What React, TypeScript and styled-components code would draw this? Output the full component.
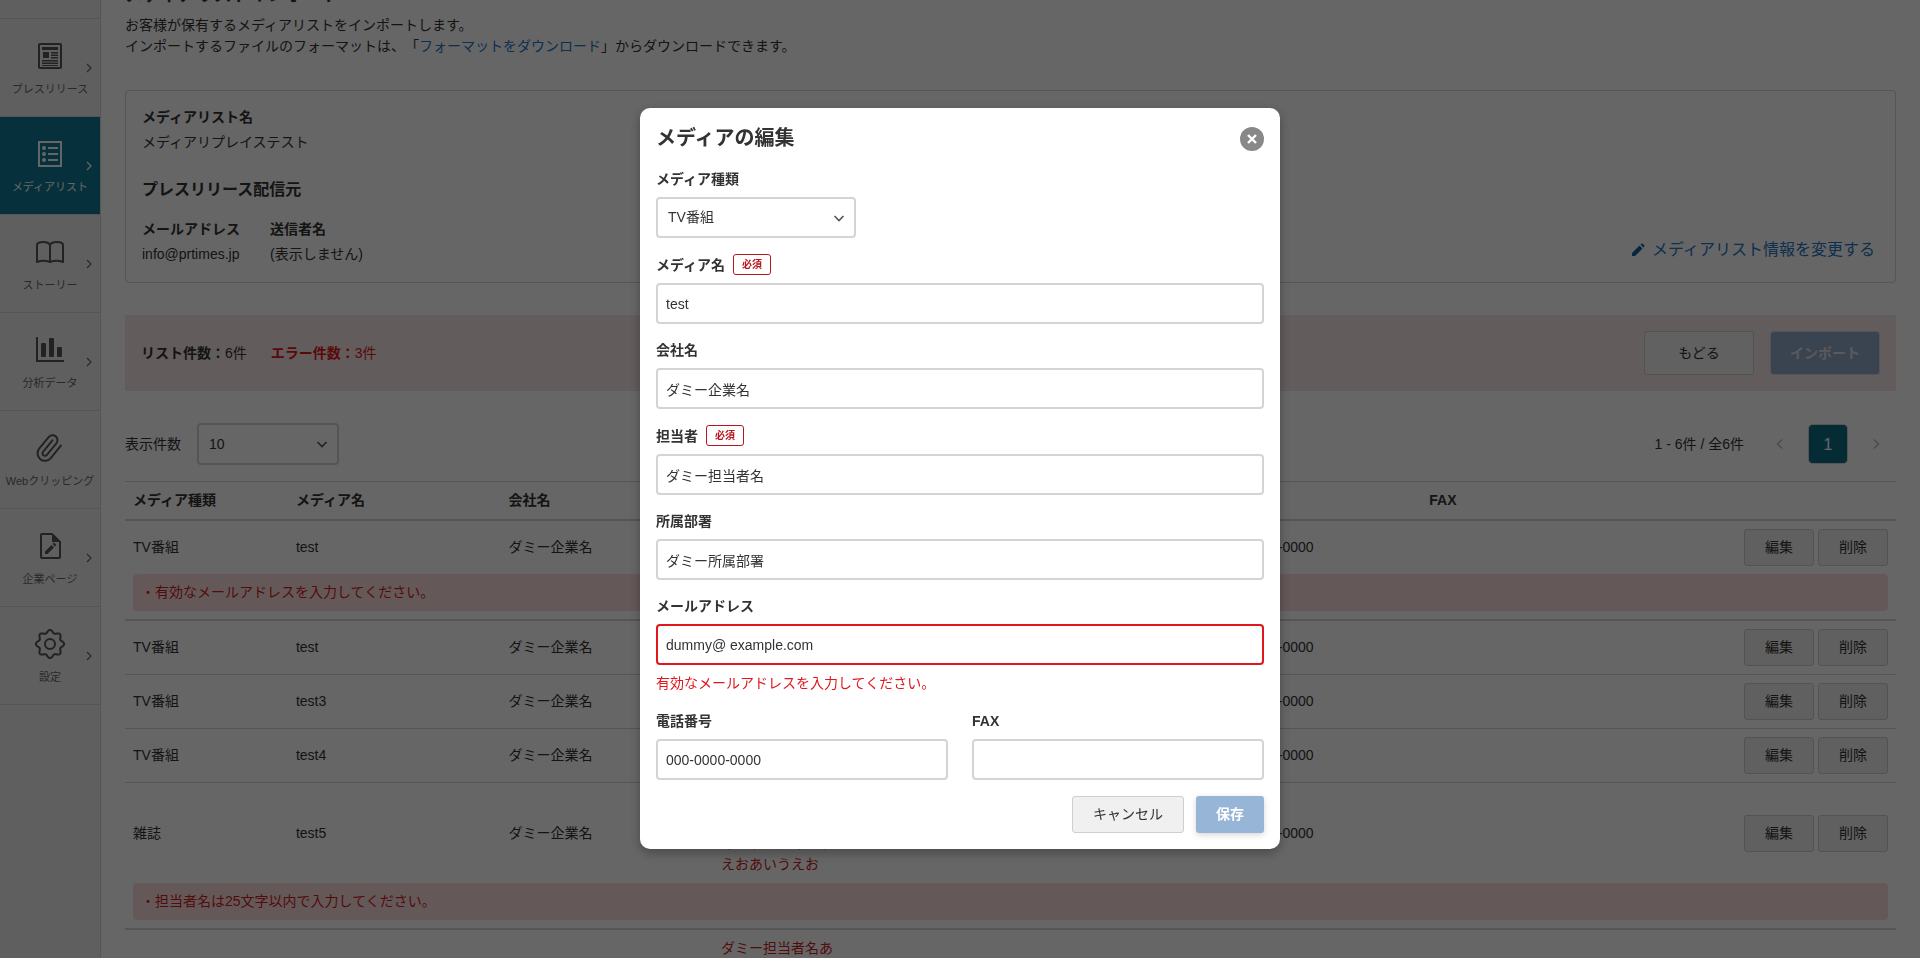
import React from "react";
import styled, { createGlobalStyle, css } from "styled-components";

const color = {
  text: "#333333",
  line: "#d4d4d4",
  link: "#2575c4",
  teal: "#0f7a97",
  danger: "#e0171c",
  badge: "#b7151b",
  errorText: "#cc1f1f",
  button: "#f0f0f0",
  primary: "#97b6d7",
};

const GlobalStyle = createGlobalStyle`
  *, *::before, *::after { box-sizing: border-box; }
  body {
    margin: 0;
    overflow: hidden;
    background: #fff;
    color: ${color.text};
    font-family: "Liberation Sans", "Noto Sans CJK JP", sans-serif;
    font-size: 14px;
    line-height: 21px;
    text-spacing-trim: space-all;
  }
  h1, h2, h3, p, dl, dt, dd, ul { margin: 0; padding: 0; }
  ul { list-style: none; }
  button, input, select { font: inherit; color: inherit; margin: 0; }
  button { cursor: pointer; }
  a { color: ${color.link}; text-decoration: none; }
`;

/* ---------- Shell ---------- */

const Shell = styled.div`
  display: flex;
  height: 100vh;
  overflow: hidden;
`;

const Sidebar = styled.nav`
  flex: none;
  width: 101px;
  padding-top: 18px;
  background: #eeeeee;
  border-right: 1px solid ${color.line};
`;

const SideList = styled.ul`
  border-bottom: 1px solid ${color.line};
`;

const SideLink = styled.a<{ $active?: boolean }>`
  position: relative;
  display: flex;
  flex-direction: column;
  align-items: center;
  gap: 8px;
  height: 98px;
  padding-top: 21px;
  border-top: 1px solid ${color.line};
  font-size: 11px;
  line-height: 18px;
  white-space: nowrap;
  color: ${(p) => (p.$active ? "#fff" : "#666")};
  ${(p) =>
    p.$active &&
    css`
      background: ${color.teal};
      background-clip: padding-box;
    `}
`;

const SideIcon = styled.svg<{ $active?: boolean }>`
  width: 32px;
  height: 32px;
  color: ${(p) => (p.$active ? "#fff" : "#555")};
`;

const SideArrow = styled.svg`
  position: absolute;
  top: 44px;
  right: 7px;
  width: 8px;
  height: 10px;
`;

const Main = styled.main`
  flex: 1;
  min-width: 0;
  margin-top: -18px;
  padding: 0 24px;
`;

const PageTitle = styled.h1`
  font-size: 18px;
  line-height: 27px;
  margin-bottom: 6px;
`;

const Lead = styled.p`
  margin-bottom: 33px;
`;

/* ---------- Summary card ---------- */

const Card = styled.section`
  display: flex;
  justify-content: space-between;
  align-items: flex-end;
  padding: 16px 20px 17px 16px;
  border: 1px solid ${color.line};
  border-radius: 4px;
`;

const CardTitle = styled.h2`
  margin: 24px 0 16px;
  font-size: 16px;
  line-height: 26px;
`;

const Facts = styled.dl`
  display: flex;
  gap: 30px;
`;

const FactName = styled.dt`
  font-weight: bold;
  margin-bottom: 4px;
`;

const EditLink = styled.a`
  display: flex;
  align-items: center;
  gap: 6px;
  height: 30px;
  font-size: 16px;
  line-height: 24px;
`;

const PencilIcon = styled.svg`
  width: 16px;
  height: 16px;
  fill: #145aa5;
`;

/* ---------- Status banner ---------- */

const Banner = styled.section`
  display: flex;
  align-items: center;
  justify-content: space-between;
  margin: 32px 0;
  padding: 16px;
  background: #f5e5e5;
`;

const Counts = styled.div`
  display: flex;
  gap: 24px;
`;

const Count = styled.p<{ $error?: boolean }>`
  color: ${(p) => (p.$error ? color.danger : "inherit")};
`;

const BannerActions = styled.div`
  display: flex;
  gap: 16px;
`;

const LargeButton = styled.button<{ $primary?: boolean }>`
  width: 110px;
  height: 44px;
  padding: 0;
  border: 1px solid ${(p) => (p.$primary ? "#d6d3d8" : "#cccccc")};
  border-radius: 3px;
  background: ${(p) => (p.$primary ? "#91aac8" : "#f2f2f2")};
  background-clip: padding-box;
  color: ${(p) => (p.$primary ? "#e0e0e8" : color.text)};
  font-weight: ${(p) => (p.$primary ? "bold" : "normal")};
`;

/* ---------- Toolbar ---------- */

const Toolbar = styled.div`
  display: flex;
  align-items: center;
  justify-content: space-between;
  margin-bottom: 16px;
`;

const PageSize = styled.label`
  display: flex;
  align-items: center;
  gap: 16px;
`;

const SelectBox = styled.span<{ $width: number; $height: number }>`
  display: grid;
  align-items: center;
  width: ${(p) => p.$width}px;
  height: ${(p) => p.$height}px;

  > * {
    grid-area: 1 / 1;
  }
`;

const Select = styled.select`
  appearance: none;
  width: 100%;
  height: 100%;
  padding: 0 32px 0 10px;
  border: 2px solid ${color.line};
  border-radius: 4px;
  background: #fff;
`;

const SelectArrow = styled.svg`
  justify-self: end;
  width: 12px;
  height: 8px;
  margin-right: 11px;
  pointer-events: none;
`;

const Pager = styled.nav`
  display: flex;
  align-items: center;
  gap: 8px;
`;

const PagerCount = styled.span`
  margin-right: 8px;
`;

const PagerButton = styled.button<{ $current?: boolean }>`
  display: flex;
  align-items: center;
  justify-content: center;
  width: 40px;
  height: 40px;
  padding: 0;
  border: 1px solid ${(p) => (p.$current ? color.line : "transparent")};
  border-radius: 4px;
  background: ${(p) => (p.$current ? "#0d6e86" : "transparent")};
  background-clip: padding-box;
  color: ${(p) => (p.$current ? "#fff" : "#bfbfbf")};
  font-size: 16px;
`;

/* ---------- Table ---------- */

const Table = styled.table`
  width: 100%;
  table-layout: fixed;
  border-collapse: separate;
  border-spacing: 0;
`;

const Col = styled.col<{ $width?: string }>`
  width: ${(p) => p.$width ?? "auto"};
`;

const Th = styled.th`
  padding: 8px;
  border-top: 1px solid ${color.line};
  border-bottom: 2px solid ${color.line};
  text-align: left;
`;

const Td = styled.td<{ $open?: boolean; $invalid?: boolean }>`
  padding: 8px;
  border-bottom: ${(p) => (p.$open ? "0" : `1px solid ${color.line}`)};
  color: ${(p) => (p.$invalid ? color.errorText : "inherit")};
  white-space: pre-line;
`;

const ErrorTd = styled.td`
  padding: 0 8px 8px;
  border-bottom: 2px solid ${color.line};
`;

const ErrorBox = styled.p`
  padding: 8px;
  border-radius: 4px;
  background: #fcdcdc;
  color: ${color.errorText};
`;

const RowActions = styled.div`
  display: flex;
  gap: 4px;
`;

const Button = styled.button<{ $primary?: boolean }>`
  height: 37px;
  padding: 0 20px;
  border: 1px solid #cfcfcf;
  border-radius: 3px;
  background: ${color.button};
  ${(p) =>
    p.$primary &&
    css`
      border: 0;
      background: ${color.primary};
      color: #fff;
      font-weight: bold;
      box-shadow: 0 2px 6px rgba(0, 0, 0, 0.16);
    `}
`;

/* ---------- Dialog ---------- */

const Overlay = styled.div`
  position: fixed;
  inset: 0;
  display: flex;
  align-items: center;
  justify-content: center;
  padding-bottom: 1px;
  background: rgba(0, 0, 0, 0.6);
`;

const Dialog = styled.form`
  display: flex;
  flex-direction: column;
  gap: 16px;
  width: 640px;
  max-width: 100%;
  padding: 16px;
  border-radius: 10px;
  background: #fff;
  box-shadow: 0 4px 12px rgba(0, 0, 0, 0.3);
`;

const DialogHeader = styled.header`
  display: flex;
  align-items: center;
  justify-content: space-between;
`;

const DialogTitle = styled.h2`
  font-size: 20px;
  line-height: 29px;
`;

const CloseButton = styled.button`
  width: 24px;
  height: 24px;
  padding: 0;
  border: 0;
  border-radius: 50%;
  background: #888;

  svg {
    display: block;
    margin: auto;
    width: 24px;
    height: 24px;
  }
`;

const FieldBox = styled.div`
  display: flex;
  flex-direction: column;
  align-items: flex-start;
  gap: 7px;
  flex: 1;
`;

const FieldLabel = styled.label`
  display: flex;
  align-items: center;
  gap: 8px;
  padding-bottom: 1px;
  font-weight: bold;
  line-height: 20px;
`;

const Required = styled.span`
  height: 21px;
  padding: 0 8px;
  border: 1px solid ${color.badge};
  border-radius: 3px;
  color: ${color.badge};
  font-size: 10px;
  line-height: 19px;
`;

const Input = styled.input<{ $invalid?: boolean }>`
  width: 100%;
  height: 41px;
  padding: 0 8px;
  border: 2px solid ${(p) => (p.$invalid ? color.danger : color.line)};
  border-radius: 4px;
  background: #fff;
  outline: none;
`;

const FieldError = styled.p`
  color: ${color.danger};
  line-height: 23px;
`;

const FieldPair = styled.div`
  display: flex;
  gap: 24px;
`;

const DialogFooter = styled.footer`
  display: flex;
  justify-content: flex-end;
  gap: 12px;
`;

/* ---------- Icon drawings ---------- */

const gearOutline = Array.from({ length: 128 }, (_, i) => {
  const a = (i / 128) * Math.PI * 2;
  const r = 12.6 + 1.5 * Math.cos(8 * a);
  return `${(16 + r * Math.sin(a)).toFixed(2)},${(16 - r * Math.cos(a)).toFixed(2)}`;
}).join(" ");

const icons: Record<string, React.ReactNode> = {
  press: (
    <>
      <rect x="5" y="4" width="22" height="24" rx="1" fill="none" stroke="currentColor" strokeWidth="2" />
      <path
        fill="currentColor"
        d="M8 7h16v3H8zM9 12h6v6H9zM17 12h7v1.5h-7zM17 14.5h7V16h-7zM17 17h7v1.5h-7zM8 20h16v1.5H8zM8 22.5h16V24H8zM8 25h16v1H8z"
      />
    </>
  ),
  list: (
    <>
      <rect x="5" y="4" width="22" height="24" fill="none" stroke="currentColor" strokeWidth="2" />
      <circle cx="10" cy="10" r="2" fill="currentColor" />
      <circle cx="10" cy="16" r="2" fill="currentColor" />
      <circle cx="10" cy="22" r="2" fill="currentColor" />
      <path d="M14 10h10M14 16h10M14 22h10" stroke="currentColor" strokeWidth="2" />
    </>
  ),
  story: (
    <path
      fill="none"
      stroke="currentColor"
      strokeWidth="2"
      strokeLinejoin="round"
      d="M16 26c-4-1.600-9-1.600-13 0V9c0-1.800 3-3 6.500-3S16 7.500 16 9.500V26c4-1.600 9-1.600 13 0V9c0-1.800-3-3-6.500-3S16 7.500 16 9.500"
    />
  ),
  chart: (
    <>
      <path d="M3 3v24h27" fill="none" stroke="currentColor" strokeWidth="2" />
      <rect x="7" y="9" width="5" height="14" rx="1" fill="currentColor" />
      <rect x="15" y="4" width="5" height="19" rx="1" fill="currentColor" />
      <rect x="23" y="13" width="5" height="10" rx="1" fill="currentColor" />
    </>
  ),
  clip: (
    <path
      transform="rotate(-6 16 16) translate(0.500 1) scale(1.240)"
      fill="none"
      stroke="currentColor"
      strokeWidth="1.600"
      strokeLinecap="round"
      strokeLinejoin="round"
      d="m21.440 11.050-9.190 9.190a6 6 0 0 1-8.490-8.490l8.570-8.570A4 4 0 1 1 18 8.840l-8.590 8.570a2 2 0 0 1-2.830-2.830l8.490-8.480"
    />
  ),
  company: (
    <>
      <path
        d="M8 4h10l8 8v15a1 1 0 0 1-1 1H8a1 1 0 0 1-1-1V5a1 1 0 0 1 1-1z"
        fill="none"
        stroke="currentColor"
        strokeWidth="2"
        strokeLinejoin="round"
      />
      <path d="M18 4v8h8z" fill="currentColor" />
      <path d="M11 24v-2.500l6.500-6.500 2.500 2.500-6.500 6.500zM18.500 14l1.500-1.500 2.500 2.500-1.500 1.500z" fill="currentColor" />
    </>
  ),
  settings: (
    <>
      <polygon points={gearOutline} fill="none" stroke="currentColor" strokeWidth="2" strokeLinejoin="round" />
      <circle cx="16" cy="16" r="5" fill="none" stroke="currentColor" strokeWidth="2" />
    </>
  ),
};

const Chevron = ({ flip = false }: { flip?: boolean }) => (
  <svg width="8" height="12" viewBox="0 0 8 12" fill="none" stroke="currentColor" strokeWidth="1.500" aria-hidden="true">
    <path d={flip ? "M6 1.500 1.500 6 6 10.500" : "M2 1.500 6.500 6 2 10.500"} />
  </svg>
);

const DownArrow = () => (
  <SelectArrow viewBox="0 0 12 8" fill="none" stroke="#555" strokeWidth="1.600" aria-hidden="true">
    <path d="M1.500 2 6 6.500 10.500 2" />
  </SelectArrow>
);

/* ---------- Data ---------- */

const menu = [
  { icon: "press", label: "プレスリリース", arrow: true },
  { icon: "list", label: "メディアリスト", arrow: true, active: true },
  { icon: "story", label: "ストーリー", arrow: true },
  { icon: "chart", label: "分析データ", arrow: true },
  { icon: "clip", label: "Webクリッピング", arrow: false },
  { icon: "company", label: "企業ページ", arrow: true },
  { icon: "settings", label: "設定", arrow: true },
];

const columns = [
  { label: "メディア種類", width: "9.2%" },
  { label: "メディア名", width: "12%" },
  { label: "会社名", width: "12%" },
  { label: "担当者", width: "9%" },
  { label: "所属部署", width: "7%" },
  { label: "メールアドレス", width: "12.1%" },
  { label: "電話番号", width: "11.9%" },
  { label: "FAX" },
  { label: "", width: "160px" },
];

const longName = "ダミー担当者名あ\nいうえおあいうえお\nあいうえおあいう\nえおあいうえお";

type Row = { kind: string; name: string; person: string; mail: string; error?: string; field?: "person" | "mail" };

const rows: Row[] = [
  { kind: "TV番組", name: "test", person: "ダミー担当者名", mail: "dummy@ example.com", error: "有効なメールアドレスを入力してください。", field: "mail" },
  { kind: "TV番組", name: "test", person: "ダミー担当者名", mail: "dummy@example.com" },
  { kind: "TV番組", name: "test3", person: "ダミー担当者名", mail: "dummy@example.com" },
  { kind: "TV番組", name: "test4", person: "ダミー担当者名", mail: "dummy@example.com" },
  { kind: "雑誌", name: "test5", person: longName, mail: "dummy@example.com", error: "担当者名は25文字以内で入力してください。", field: "person" },
  { kind: "雑誌", name: "test6", person: longName, mail: "dummy@example.com", error: "担当者名は25文字以内で入力してください。", field: "person" },
];

/* ---------- Parts ---------- */

function Field(props: { id: string; label: string; value?: string; required?: boolean; error?: string }) {
  return (
    <FieldBox>
      <FieldLabel htmlFor={props.id}>
        {props.label}
        {props.required && <Required>必須</Required>}
      </FieldLabel>
      <Input id={props.id} type="text" defaultValue={props.value} $invalid={!!props.error} aria-invalid={!!props.error} />
      {props.error && <FieldError>{props.error}</FieldError>}
    </FieldBox>
  );
}

function EditDialog() {
  return (
    <Overlay>
      <Dialog role="dialog" aria-modal="true" aria-labelledby="dialog-title" onSubmit={(e) => e.preventDefault()}>
        <DialogHeader>
          <DialogTitle id="dialog-title">メディアの編集</DialogTitle>
          <CloseButton type="button" aria-label="閉じる">
            <svg viewBox="0 0 24 24" stroke="#fff" strokeWidth="2.400" aria-hidden="true">
              <path d="M8 8l8 8M16 8l-8 8" />
            </svg>
          </CloseButton>
        </DialogHeader>
        <FieldBox>
          <FieldLabel htmlFor="kind">メディア種類</FieldLabel>
          <SelectBox $width={200} $height={41}>
            <Select id="kind" defaultValue="TV番組">
              <option>TV番組</option>
              <option>雑誌</option>
            </Select>
            <DownArrow />
          </SelectBox>
        </FieldBox>
        <Field id="name" label="メディア名" value="test" required />
        <Field id="company" label="会社名" value="ダミー企業名" />
        <Field id="person" label="担当者" value="ダミー担当者名" required />
        <Field id="department" label="所属部署" value="ダミー所属部署" />
        <Field id="mail" label="メールアドレス" value="dummy@ example.com" error="有効なメールアドレスを入力してください。" />
        <FieldPair>
          <Field id="tel" label="電話番号" value="000-0000-0000" />
          <Field id="fax" label="FAX" />
        </FieldPair>
        <DialogFooter>
          <Button type="button">キャンセル</Button>
          <Button type="submit" $primary>
            保存
          </Button>
        </DialogFooter>
      </Dialog>
    </Overlay>
  );
}

function MediaTable() {
  return (
    <Table>
      <colgroup>
        {columns.map((column) => (
          <Col key={column.label} $width={column.width} />
        ))}
      </colgroup>
      <thead>
        <tr>
          {columns.map((column) => (
            <Th key={column.label}>{column.label}</Th>
          ))}
        </tr>
      </thead>
      <tbody>
        {rows.map((row, index) => (
          <React.Fragment key={index}>
            <tr>
              <Td $open={!!row.error}>{row.kind}</Td>
              <Td $open={!!row.error}>{row.name}</Td>
              <Td $open={!!row.error}>ダミー企業名</Td>
              <Td $open={!!row.error} $invalid={row.field === "person"}>
                {row.person}
              </Td>
              <Td $open={!!row.error}>ダミー所属部署</Td>
              <Td $open={!!row.error} $invalid={row.field === "mail"}>
                {row.mail}
              </Td>
              <Td $open={!!row.error}>000-0000-0000</Td>
              <Td $open={!!row.error} />
              <Td $open={!!row.error}>
                <RowActions>
                  <Button type="button">編集</Button>
                  <Button type="button">削除</Button>
                </RowActions>
              </Td>
            </tr>
            {row.error && (
              <tr>
                <ErrorTd colSpan={columns.length}>
                  <ErrorBox>・{row.error}</ErrorBox>
                </ErrorTd>
              </tr>
            )}
          </React.Fragment>
        ))}
      </tbody>
    </Table>
  );
}

export default function App() {
  return (
    <>
      <GlobalStyle />
      <Shell>
        <Sidebar>
          <SideList>
            {menu.map((item) => (
              <li key={item.icon}>
                <SideLink href="#" $active={item.active}>
                  <SideIcon viewBox="0 0 32 32" $active={item.active} aria-hidden="true">
                    {icons[item.icon]}
                  </SideIcon>
                  {item.label}
                  {item.arrow && (
                    <SideArrow viewBox="0 0 8 10" fill="none" stroke="currentColor" strokeWidth="1.200" aria-hidden="true">
                      <path d="M2 1l4 4-4 4" />
                    </SideArrow>
                  )}
                </SideLink>
              </li>
            ))}
          </SideList>
        </Sidebar>
        <Main>
          <PageTitle>メディアリストインポート</PageTitle>
          <Lead>
            お客様が保有するメディアリストをインポートします。
            <br />
            インポートするファイルのフォーマットは、「<a href="#">フォーマットをダウンロード</a>」からダウンロードできます。
          </Lead>
          <Card>
            <div>
              <dl>
                <FactName>メディアリスト名</FactName>
                <dd>メディアリプレイステスト</dd>
              </dl>
              <CardTitle>プレスリリース配信元</CardTitle>
              <Facts>
                <div>
                  <FactName>メールアドレス</FactName>
                  <dd>info@prtimes.jp</dd>
                </div>
                <div>
                  <FactName>送信者名</FactName>
                  <dd>(表示しません)</dd>
                </div>
              </Facts>
            </div>
            <EditLink href="#">
              <PencilIcon viewBox="0 0 16 16" aria-hidden="true">
                <path d="M2 14v-3l7.500-7.500 3 3L5 14zM10.500 2.600l.8-.8q.7-.6 1.400 0l1.500 1.500q.6.7 0 1.400l-.8.8z" />
              </PencilIcon>
              メディアリスト情報を変更する
            </EditLink>
          </Card>
          <Banner>
            <Counts>
              <Count>
                <b>リスト件数：</b>6件
              </Count>
              <Count $error>
                <b>エラー件数：</b>3件
              </Count>
            </Counts>
            <BannerActions>
              <LargeButton type="button">もどる</LargeButton>
              <LargeButton type="button" $primary>
                インポート
              </LargeButton>
            </BannerActions>
          </Banner>
          <Toolbar>
            <PageSize>
              表示件数
              <SelectBox $width={142} $height={42}>
                <Select defaultValue="10">
                  <option>10</option>
                  <option>50</option>
                </Select>
                <DownArrow />
              </SelectBox>
            </PageSize>
            <Pager aria-label="ページ">
              <PagerCount>1 - 6件 / 全6件</PagerCount>
              <PagerButton type="button" aria-label="前へ">
                <Chevron flip />
              </PagerButton>
              <PagerButton type="button" $current>
                1
              </PagerButton>
              <PagerButton type="button" aria-label="次へ">
                <Chevron />
              </PagerButton>
            </Pager>
          </Toolbar>
          <MediaTable />
        </Main>
      </Shell>
      <EditDialog />
    </>
  );
}
